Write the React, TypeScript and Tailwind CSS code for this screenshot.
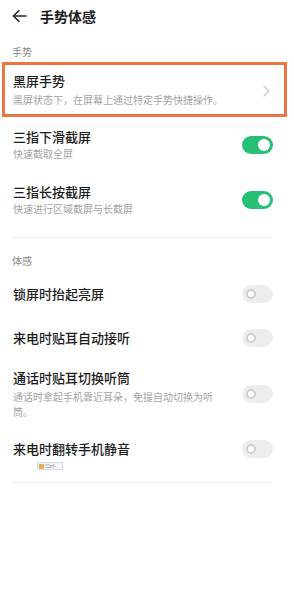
import React from "react";

const font = { fontFamily: '"Noto Sans CJK SC", "Noto Sans", sans-serif' };

function Toggle({ on }: { on: boolean }) {
  if (on) {
    return (
      <div className="w-[31px] h-[18px] rounded-full bg-[#27c075] flex items-center justify-end pr-[3px] shrink-0">
        <div className="w-[12px] h-[12px] rounded-full bg-white" />
      </div>
    );
  }
  return (
    <div className="w-[31px] h-[18px] rounded-full bg-[#ededed] flex items-center pl-[4px] shrink-0">
      <div className="w-[10px] h-[10px] rounded-full bg-white border-[2px] border-[#cfcfcf]" />
    </div>
  );
}

export default function App() {
  return (
    <div className="w-[294px] h-[600px] bg-white text-[#1c1c1c] overflow-hidden" style={font}>
      {/* Header */}
      <div className="h-[32px] flex items-center pl-[12px]">
        <svg width="15" height="14" viewBox="0 0 15 14" fill="none" stroke="#222" strokeWidth="1.5" strokeLinecap="round" strokeLinejoin="round">
          <line x1="1.5" y1="7" x2="14" y2="7" />
          <polyline points="7,1.5 1.5,7 7,12.5" />
        </svg>
        <span className="ml-[13px] text-[14px] leading-[18px] font-bold">手势体感</span>
      </div>

      {/* Section label */}
      <div className="mt-[13px] px-[12px] h-[14px] text-[10px] leading-[14px] text-[#8a8a8a]">手势</div>

      {/* Highlighted row */}
      <div className="mt-[3px] ml-[2px] mr-[7px] h-[55px] border-[3px] border-[#ef7344] pl-[8px] pr-[14px] pt-[7px] flex justify-between">
        <div>
          <div className="text-[13px] leading-[18px] font-medium">黑屏手势</div>
          <div className="mt-[3px] text-[10px] leading-[14px] text-[#a3a3a3]">黑屏状态下，在屏幕上通过特定手势快捷操作。</div>
        </div>
        <div className="flex items-center pb-[4px]">
          <svg width="7" height="12" viewBox="0 0 7 12" fill="none" stroke="#c9c9c9" strokeWidth="1.2" strokeLinecap="round" strokeLinejoin="round">
            <polyline points="1,1 6,6 1,11" />
          </svg>
        </div>
      </div>

      {/* Row 2 */}
      <div className="h-[55px] pl-[13px] pr-[21px] flex items-center justify-between">
        <div>
          <div className="text-[13px] leading-[18px] font-medium">三指下滑截屏</div>
          <div className="mt-[1px] text-[10px] leading-[14px] text-[#a3a3a3]">快速截取全屏</div>
        </div>
        <Toggle on />
      </div>

      {/* Row 3 */}
      <div className="h-[55px] pl-[13px] pr-[21px] flex items-center justify-between">
        <div>
          <div className="text-[13px] leading-[18px] font-medium">三指长按截屏</div>
          <div className="mt-[1px] text-[10px] leading-[14px] text-[#a3a3a3]">快速进行区域截屏与长截屏</div>
        </div>
        <Toggle on />
      </div>

      <div className="mt-[10px] mx-[12px] w-[260px] h-[1px] bg-[#ececec]" />

      <div className="mt-[16px] px-[12px] h-[14px] text-[10px] leading-[14px] text-[#8a8a8a]">体感</div>

      <div className="mt-[4px] h-[44px] pl-[13px] pr-[21px] flex items-center justify-between">
        <div className="text-[13px] leading-[18px] font-medium">锁屏时抬起亮屏</div>
        <Toggle on={false} />
      </div>

      <div className="h-[44px] pl-[13px] pr-[21px] flex items-center justify-between">
        <div className="text-[13px] leading-[18px] font-medium">来电时贴耳自动接听</div>
        <Toggle on={false} />
      </div>

      <div className="pt-[9px] pb-[10px] pl-[13px] pr-[21px] flex items-center justify-between">
        <div className="w-[206px]">
          <div className="text-[13px] leading-[18px] font-medium">通话时贴耳切换听筒</div>
          <div className="mt-[2px] text-[10px] leading-[15px] text-[#a3a3a3]">通话时拿起手机靠近耳朵，免提自动切换为听筒。</div>
        </div>
        <Toggle on={false} />
      </div>

      <div className="pt-[11px] pl-[13px] pr-[21px]">
        <div className="flex items-center justify-between">
          <div className="text-[13px] leading-[18px] font-medium">来电时翻转手机静音</div>
          <Toggle on={false} />
        </div>
        <div className="mt-[4px] ml-[24px] w-[26px] h-[8px] border border-[#d6dbe2] bg-[#f4f6f9] flex items-center gap-[1px] px-[1px] overflow-hidden">
          <div className="w-[5px] h-[5px] bg-[#e6b24a] shrink-0" />
          <span className="text-[6px] leading-[6px] text-[#8a8f99]" style={{ fontFamily: '"Liberation Sans", sans-serif' }}>Ctrl-</span>
        </div>
      </div>

      <div className="mt-[12px] mx-[12px] w-[260px] h-[1px] bg-[#ececec]" />
    </div>
  );
}
